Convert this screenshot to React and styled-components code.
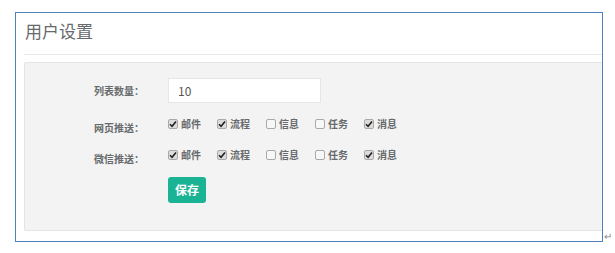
import React from 'react';
import styled, { createGlobalStyle } from 'styled-components';

const GlobalStyle = createGlobalStyle`
  * {
    box-sizing: border-box;
  }
  body {
    margin: 0;
    background: #fff;
    font-family: "Noto Sans CJK SC", "Liberation Sans", sans-serif;
  }
`;

const Page = styled.div`
  display: flex;
  align-items: flex-end;
  padding: 12px 0 0 15px;
`;

const Frame = styled.div`
  width: 588px;
  height: 230px;
  border: 1px solid #4f81bd;
  padding-left: 8px;
  overflow: hidden;
`;

const ReturnMark = styled.span`
  font-size: 10px;
  line-height: 10px;
  color: #8a8a8a;
  margin: 0 0 1px 1px;
`;

const Header = styled.div`
  height: 42px;
  padding: 6px 0 0 1px;
  border-bottom: 1px solid #e7eaec;
`;

const Title = styled.h2`
  margin: 0;
  font-size: 17px;
  line-height: 24px;
  font-weight: 400;
  color: #676a6c;
`;

const Panel = styled.div`
  margin-top: 7px;
  height: 169px;
  background: #f3f3f3;
  border: 1px solid #e4e4e4;
  border-right: 0;
  border-radius: 2px 0 0 2px;
  padding-top: 15px;
`;

const Row = styled.div`
  display: grid;
  grid-template-columns: 119px auto;
  column-gap: 24px;
  align-items: start;
  margin-top: ${(p) => p.$gap || 0}px;
`;

const Label = styled.label`
  text-align: right;
  font-size: 10px;
  font-weight: 700;
  color: #676a6c;
  line-height: ${(p) => (p.$tall ? '25px' : '14px')};
  padding-top: ${(p) => (p.$tall ? 0 : 4)}px;
  white-space: nowrap;
`;

const TextInput = styled.input`
  width: 153px;
  height: 25px;
  border: 1px solid #e5e6e7;
  background: #fff;
  padding: 0 9px;
  font-family: inherit;
  font-size: 12px;
  color: #555;
  outline: none;
`;

const Checks = styled.div`
  display: flex;
  align-items: center;
  height: 14px;
`;

const CheckItem = styled.span`
  display: flex;
  align-items: center;
  margin-right: 16px;
  font-size: 10px;
  font-weight: 700;
  color: #676a6c;
  line-height: 14px;
`;

const Box = styled.span`
  display: flex;
  align-items: center;
  justify-content: center;
  width: 10px;
  height: 10px;
  margin-right: 3px;
  border: 1px solid #a9a9a9;
  border-radius: 2px;
  background: ${(p) => (p.$checked ? '#dcdcdc' : '#f7f7f7')};
`;

const SaveButton = styled.button`
  width: 38px;
  height: 26px;
  border: 0;
  border-radius: 3px;
  background: #1ab394;
  color: #fff;
  font-family: inherit;
  font-size: 12px;
  font-weight: 700;
  padding: 0;
`;

const options = [
  { id: 'mail', label: '邮件' },
  { id: 'flow', label: '流程' },
  { id: 'info', label: '信息' },
  { id: 'task', label: '任务' },
  { id: 'msg', label: '消息' },
];

const Check = ({ checked, children }) => (
  <CheckItem>
    <Box $checked={checked}>
      {checked && (
        <svg width="8" height="8" viewBox="0 0 8 8">
          <path d="M1 4.2 L3.1 6.3 L7 1.6" fill="none" stroke="#222" strokeWidth="1.6" />
        </svg>
      )}
    </Box>
    {children}
  </CheckItem>
);

const CheckRow = ({ label, checked, gap }) => (
  <Row $gap={gap}>
    <Label>{label}</Label>
    <Checks>
      {options.map((o) => (
        <Check key={o.id} checked={checked.includes(o.id)}>
          {o.label}
        </Check>
      ))}
    </Checks>
  </Row>
);

export default function App() {
  return (
    <>
      <GlobalStyle />
      <Page>
        <Frame>
          <Header>
            <Title>用户设置</Title>
          </Header>
          <Panel>
            <Row>
              <Label $tall>列表数量：</Label>
              <TextInput defaultValue="10" />
            </Row>
            <CheckRow label="网页推送：" checked={['mail', 'flow', 'msg']} gap={14} />
            <CheckRow label="微信推送：" checked={['mail', 'flow', 'msg']} gap={13} />
            <Row $gap={10}>
              <span />
              <div>
                <SaveButton>保存</SaveButton>
              </div>
            </Row>
          </Panel>
        </Frame>
        <ReturnMark>↵</ReturnMark>
      </Page>
    </>
  );
}
